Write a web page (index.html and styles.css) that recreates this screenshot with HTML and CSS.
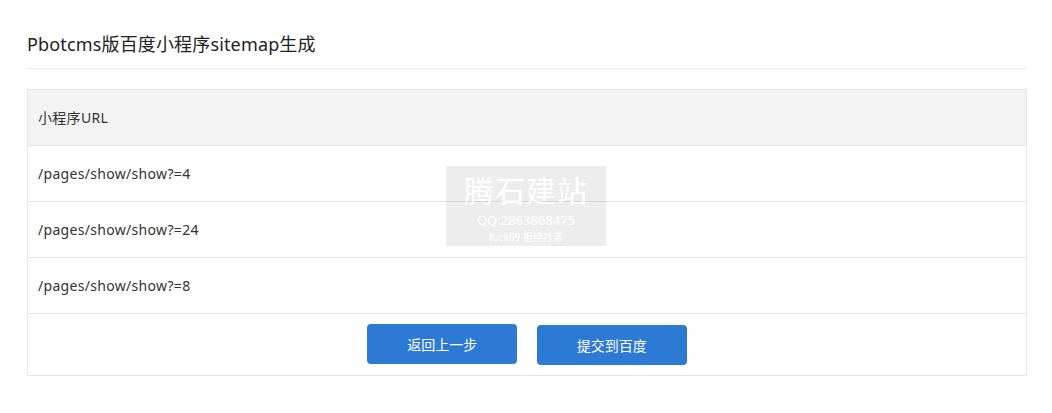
FILE: index.html
```html
<!DOCTYPE html>
<html lang="zh-CN">
<head>
    <meta charset="UTF-8">
    <title>Pbotcms版百度小程序sitemap生成</title>
    <link rel="stylesheet" href="styles.css">
</head>
<body>
    <div class="page">
        <h2 class="page-title">Pbotcms版百度小程序sitemap生成</h2>
        <table class="url-table">
            <thead>
                <tr><th>小程序URL</th></tr>
            </thead>
            <tbody>
                <tr><td>/pages/show/show?=4</td></tr>
                <tr><td>/pages/show/show?=24</td></tr>
                <tr><td>/pages/show/show?=8</td></tr>
                <tr>
                    <td class="actions">
                        <button class="btn" type="button">返回上一步</button>
                        <button class="btn btn-low" type="button">提交到百度</button>
                    </td>
                </tr>
            </tbody>
        </table>
    </div>
    <div class="watermark">
        <div class="wm-name">腾石建站</div>
        <div class="wm-qq">QQ:2863868475</div>
        <div class="wm-note">fuck69 拒绝抄袭</div>
    </div>
</body>
</html>
```

FILE: styles.css
```css
body {
    margin: 0;
    background-color: #fff;
    color: #333;
    font-family: "Noto Sans", "Noto Sans CJK SC", sans-serif;
    font-size: 14px;
}

.page {
    width: 1000px;
    padding: 28px 0 0 27px;
}

.page-title {
    margin: 0;
    padding-bottom: 7px;
    border-bottom: 1px solid #e6e6e6;
    font-size: 18px;
    font-weight: normal;
    line-height: 33px;
    letter-spacing: 0.15px;
    color: #222;
}

.url-table {
    width: 100%;
    margin-top: 20px;
    border-collapse: collapse;
}

.url-table th,
.url-table td {
    height: 55px;
    padding: 0 10px;
    border: 1px solid #e6e6e6;
    text-align: left;
    font-weight: normal;
    line-height: 20px;
    letter-spacing: 0.3px;
}

.url-table th {
    background-color: #f3f3f3;
}

.url-table td.actions {
    height: 61px;
    padding: 0;
    text-align: center;
    letter-spacing: 0;
}

.btn {
    width: 150px;
    height: 40px;
    margin: 0 8px;
    border: none;
    border-radius: 4px;
    background-color: #2d7ad5;
    color: #fff;
    font-family: inherit;
    font-size: 14px;
    position: relative;
    top: -1px;
}

.btn-low {
    top: 0;
}

.watermark {
    position: absolute;
    left: 446px;
    top: 166px;
    width: 160px;
    height: 76px;
    padding-top: 4px;
    background-color: rgba(0, 0, 0, 0.07);
    color: #fff;
    text-align: center;
}

.wm-name {
    font-size: 30px;
    line-height: 42px;
    letter-spacing: 1px;
}

.wm-qq {
    font-size: 13px;
    line-height: 16px;
}

.wm-note {
    font-size: 10px;
    line-height: 18px;
}
```
